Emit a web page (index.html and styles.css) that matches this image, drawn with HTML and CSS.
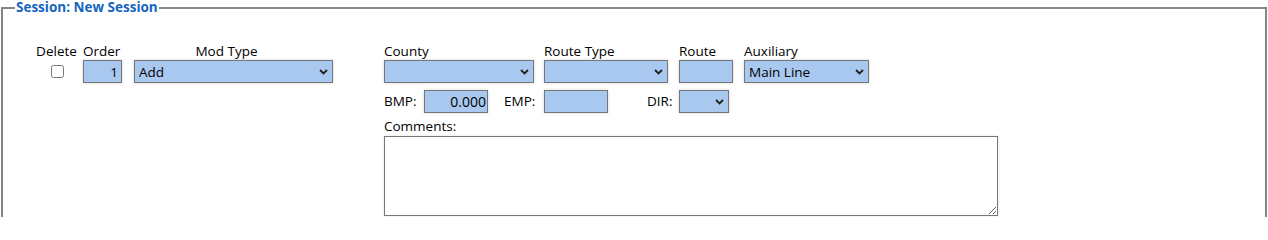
FILE: index.html
```html
<!DOCTYPE html>
<html>
<head>
<meta charset="utf-8">
<link rel="stylesheet" href="styles.css">
</head>
<body>
<fieldset class="session">
  <legend class="session-title">Session: New Session</legend>
  <div class="mod-row">
    <div class="left-grid">
      <div class="lbl lbl-center">Delete</div>
      <div class="lbl lbl-order">Order</div>
      <div class="lbl lbl-mod">Mod Type</div>
      <div class="cell-center"><input type="checkbox" class="chk"></div>
      <div class="cell-order"><input type="text" class="fld fld-order" value="1"></div>
      <div class="sel-wrap sel-mod">
        <select class="sel"><option>Add</option></select>
        <svg class="chev" width="9" height="6" viewBox="0 0 9 6"><path d="M1 1 L4.5 4.5 L8 1" fill="none" stroke="#222" stroke-width="1.9"/></svg>
      </div>
    </div>
    <div class="right-block">
      <div class="right-grid">
        <div class="lbl">County</div>
        <div class="lbl">Route Type</div>
        <div class="lbl">Route</div>
        <div class="lbl">Auxiliary</div>
        <div class="sel-wrap sel-county">
          <select class="sel"><option></option></select>
          <svg class="chev" width="9" height="6" viewBox="0 0 9 6"><path d="M1 1 L4.5 4.5 L8 1" fill="none" stroke="#222" stroke-width="1.9"/></svg>
        </div>
        <div class="sel-wrap sel-rtype">
          <select class="sel"><option></option></select>
          <svg class="chev" width="9" height="6" viewBox="0 0 9 6"><path d="M1 1 L4.5 4.5 L8 1" fill="none" stroke="#222" stroke-width="1.9"/></svg>
        </div>
        <div><input type="text" class="fld fld-route" value=""></div>
        <div class="sel-wrap sel-aux">
          <select class="sel"><option>Main Line</option></select>
          <svg class="chev" width="9" height="6" viewBox="0 0 9 6"><path d="M1 1 L4.5 4.5 L8 1" fill="none" stroke="#222" stroke-width="1.9"/></svg>
        </div>
      </div>
      <div class="row2">
        <span class="lbl lbl-bmp">BMP:</span>
        <input type="text" class="fld fld-bmp" value="0.000">
        <span class="lbl lbl-emp">EMP:</span>
        <input type="text" class="fld fld-emp" value="">
        <span class="lbl lbl-dir">DIR:</span>
        <div class="sel-wrap sel-dir">
          <select class="sel"><option></option></select>
          <svg class="chev" width="9" height="6" viewBox="0 0 9 6"><path d="M1 1 L4.5 4.5 L8 1" fill="none" stroke="#222" stroke-width="1.9"/></svg>
        </div>
      </div>
      <div class="lbl lbl-comments">Comments:</div>
      <textarea class="comments"></textarea>
    </div>
  </div>
</fieldset>
</body>
</html>
```
FILE: styles.css
```css
html, body {
  margin: 0;
  padding: 0;
  background: #fff;
  font-family: "Open Sans", "Noto Sans", sans-serif;
  font-size: 13.5px;
  color: #000;
  height: 217px;
  overflow: hidden;
}

.session {
  margin: 0 1px;
  padding: 0;
  border: 2px solid #858585;
  border-bottom: none;
  height: 217px;
  box-sizing: border-box;
}

.session-title {
  font-weight: bold;
  color: #1565c0;
  font-size: 13.5px;
  line-height: 15px;
  padding: 0 1px;
  margin-left: 12px;
}

.mod-row {
  display: flex;
  align-items: flex-start;
  margin-top: 28px;
  padding-left: 29px;
}

.lbl {
  line-height: 17px;
  white-space: nowrap;
}

.left-grid {
  display: grid;
  grid-template-columns: 51px 51px 199px;
  grid-template-rows: 17px 23px;
}

.lbl-center { text-align: center; padding-right: 2px; }
.lbl-order { padding-left: 0; }
.lbl-mod { text-align: center; padding-right: 14px; }

.cell-center {
  display: flex;
  justify-content: center;
  align-items: center;
  padding-right: 1px;
}

.chk {
  width: 13px;
  height: 13px;
  margin: 0;
}

.fld {
  box-sizing: border-box;
  height: 23px;
  border: 1px solid #767676;
  background: #a8c8ef;
  font-family: inherit;
  font-size: 13.5px;
  color: #000;
  padding: 0 3px;
  margin: 0;
  box-shadow: 0 0 3px rgba(0,0,0,0.18);
  outline: none;
}

.fld-order { width: 39px; text-align: right; }
.fld-route { width: 54px; }
.fld-bmp { width: 64px; height: 23px; text-align: right; font-size: 14px; padding-right: 1px; }
.fld-emp { width: 64px; height: 23px; }

.sel-wrap {
  position: relative;
  height: 23px;
}

.sel {
  -webkit-appearance: none;
  appearance: none;
  box-sizing: border-box;
  width: 100%;
  height: 100%;
  border: 1px solid #767676;
  border-radius: 0;
  background: #a8c8ef;
  font-family: inherit;
  font-size: 13.5px;
  color: #000;
  padding: 0 0 0 4px;
  margin: 0;
  box-shadow: 0 0 3px rgba(0,0,0,0.18);
  outline: none;
}

.chev {
  position: absolute;
  right: 5px;
  top: 9px;
}

.sel-mod { width: 199px; }

.right-block {
  margin-left: 51px;
  display: flex;
  flex-direction: column;
}

.right-grid {
  display: grid;
  grid-template-columns: 160px 135px 65px 125px;
  grid-template-rows: 17px 23px;
}

.sel-county { width: 150px; }
.sel-rtype { width: 124px; }
.sel-aux { width: 125px; }

.row2 {
  display: flex;
  align-items: center;
  margin-top: 7px;
  height: 23px;
}

.lbl-bmp { width: 40px; }
.lbl-emp { margin-left: 16px; width: 40px; }
.lbl-dir { margin-left: 39px; width: 32px; }

.sel-dir { width: 50px; height: 23px; }

.lbl-comments {
  margin-top: 5px;
  line-height: 17px;
}

.comments {
  box-sizing: border-box;
  width: 614px;
  height: 80px;
  margin: 1px 0 0 0;
  border: 1px solid #767676;
  background: #fff;
  font-family: inherit;
  font-size: 13px;
  resize: both;
  box-shadow: 0 0 3px rgba(0,0,0,0.12);
  outline: none;
}
```
